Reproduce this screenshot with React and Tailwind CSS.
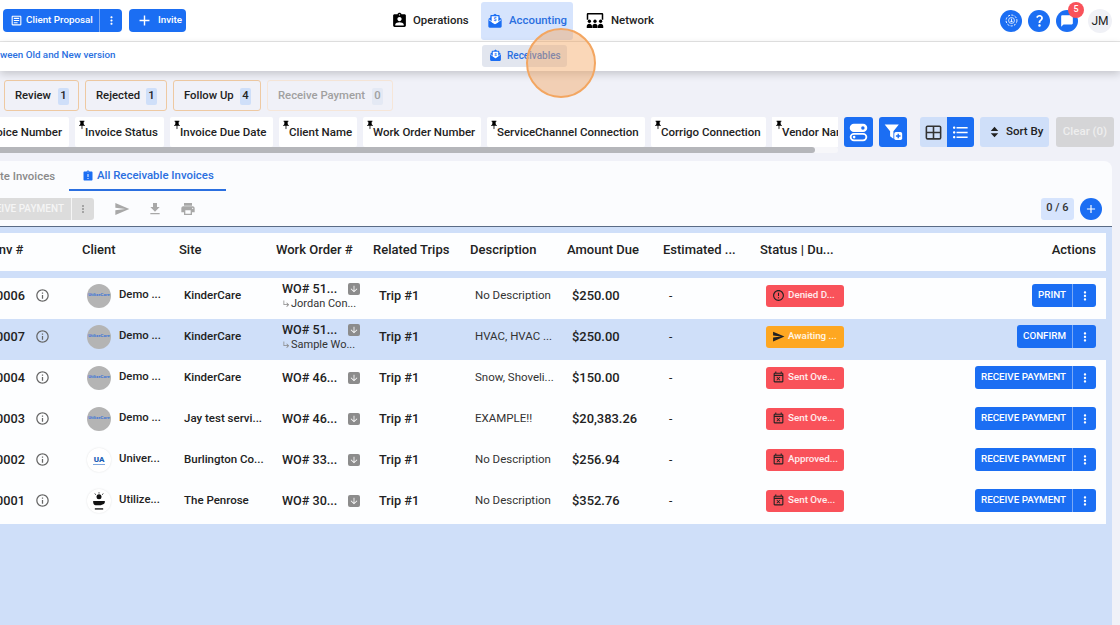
import React from "react";
import {
  MdAssignmentInd,
  MdAssignmentLate,
  MdOutlineArticle,
  MdAdd,
  MdMoreVert,
  MdPushPin,
  MdFormatListBulleted,
  MdSend,
  MdFileDownload,
  MdPrint,
  MdInfoOutline,
  MdErrorOutline,
  MdOutlineEventBusy,
  MdArrowDownward,
  MdQuestionMark,
  MdChatBubble,
  MdSubdirectoryArrowRight,
} from "react-icons/md";

function MoneyMail({ className }) {
  return (
    <svg viewBox="0 0 24 24" className={className} fill="currentColor">
      <path d="M2 9l3-2.400V4.500C5 3.700 5.700 3 6.500 3h2.700L12 1l2.800 2h2.700c.8 0 1.500.7 1.500 1.500v2.100L22 9v11c0 1.100-.9 2-2 2H4c-1.100 0-2-.9-2-2V9z" />
      <path d="M7 5h10v9l-5 3-5-3z" fill="#fff" />
      <path d="M2.500 10L12 16l9.500-6" fill="none" stroke="#fff" strokeWidth="1.200" />
      <text x="12" y="12.500" textAnchor="middle" fontSize="8" fontWeight="700" fontFamily="Roboto, sans-serif">$</text>
    </svg>
  );
}

function NetworkIcon({ className }) {
  return (
    <svg viewBox="0 0 24 20" className={className} fill="currentColor">
      <path d="M2.500 0h19A1.500 1.500 0 0 1 23 1.500V9h-2V2H3v7H1V1.500A1.500 1.500 0 0 1 2.500 0z" />
      <circle cx="4.500" cy="11" r="2.200" />
      <circle cx="12" cy="11" r="2.200" />
      <circle cx="19.500" cy="11" r="2.200" />
      <path d="M1 20v-2.500C1 15.500 2.500 14.300 4.500 14.300S8 15.500 8 17.500V20zM8.500 20v-2.500c0-2 1.500-3.200 3.500-3.200s3.500 1.200 3.500 3.200V20zM16 20v-2.500c0-2 1.500-3.200 3.500-3.200s3.500 1.200 3.500 3.200V20z" />
    </svg>
  );
}

function ToggleIcon({ className }) {
  return (
    <svg viewBox="0 0 24 24" className={className} fill="none" stroke="currentColor" strokeWidth="2">
      <rect x="3" y="3" width="18" height="7.500" rx="3.750" fill="currentColor" />
      <circle cx="17" cy="6.750" r="2" fill="#1b6ef3" stroke="none" />
      <rect x="3" y="13.500" width="18" height="7.500" rx="3.750" />
      <circle cx="7" cy="17.250" r="1.500" fill="currentColor" stroke="none" />
    </svg>
  );
}

function FilterPlus({ className }) {
  return (
    <svg viewBox="0 0 24 24" className={className} fill="currentColor">
      <path d="M2 3h17l-6.500 8v9l-4-3v-6z" />
      <rect x="13.500" y="12" width="9.500" height="9.500" rx="2" />
      <path d="M18.250 14v5.500M15.500 16.750H21" stroke="#1b6ef3" strokeWidth="1.600" />
    </svg>
  );
}

function GridIcon({ className }) {
  return (
    <svg viewBox="0 0 24 24" className={className} fill="none" stroke="currentColor" strokeWidth="2">
      <rect x="3" y="4" width="18" height="16" rx="1.500" />
      <path d="M3 12h18M12 4v16" />
    </svg>
  );
}

function SortIcon({ className }) {
  return (
    <svg viewBox="0 0 12 16" className={className} fill="currentColor">
      <path d="M6 1l5 5.500H1zM1 9.500h10L6 15z" />
    </svg>
  );
}

function DashedDown({ className }) {
  return (
    <svg viewBox="0 0 24 24" className={className} fill="none" stroke="currentColor" strokeWidth="1.800">
      <circle cx="12" cy="12" r="10" strokeDasharray="4 2.500" />
      <circle cx="12" cy="12" r="5.500" strokeWidth="1.400" />
      <path d="M12 8.500v6.500M9.500 12.500l2.500 2.500 2.500-2.500" strokeWidth="1.500" />
    </svg>
  );
}

function HandLogo({ className }) {
  return (
    <svg viewBox="0 0 24 24" className={className} fill="#111">
      <circle cx="12" cy="7" r="3" />
      <path d="M7 3l1 1.500M12 1.500v1.500M17 3l-1 1.500" stroke="#111" strokeWidth="1" />
      <path d="M5 12h14v1.500c0 1-1 2-2 2.500l-3 1H8c-2 0-3-2-3-3.500z" />
      <path d="M7 21.500h10" stroke="#111" strokeWidth="1.600" />
    </svg>
  );
}

const filters = [
  { label: "Review", count: 1, w: "w-[75px]" },
  { label: "Rejected", count: 1, w: "w-[82px]" },
  { label: "Follow Up", count: 4, w: "w-[88px]" },
];

const columns = [
  { label: "Invoice Status", w: "w-[89px]" },
  { label: "Invoice Due Date", w: "w-[103px]" },
  { label: "Client Name", w: "w-[78px]" },
  { label: "Work Order Number", w: "w-[118px]" },
  { label: "ServiceChannel Connection", w: "w-[158px]" },
  { label: "Corrigo Connection", w: "w-[115px]" },
];

const rows = [
  { inv: "0006", logo: "demo", client: "Demo ...", site: "KinderCare", wo: "WO# 51...", sub: "Jordan Con...", desc: "No Description", amount: "$250.00", status: "Denied D...", tone: "red", Icon: MdErrorOutline, action: "PRINT", actionW: "w-[41px]" },
  { inv: "0007", logo: "demo", client: "Demo ...", site: "KinderCare", wo: "WO# 51...", sub: "Sample Wo...", desc: "HVAC, HVAC ...", amount: "$250.00", status: "Awaiting ...", tone: "amber", Icon: MdSend, action: "CONFIRM", actionW: "w-[56px]", selected: true },
  { inv: "0004", logo: "demo", client: "Demo ...", site: "KinderCare", wo: "WO# 46...", desc: "Snow, Shoveli...", amount: "$150.00", status: "Sent Ove...", tone: "red", Icon: MdOutlineEventBusy, action: "RECEIVE PAYMENT", actionW: "w-[98px]" },
  { inv: "0003", logo: "demo", client: "Demo ...", site: "Jay test servi...", wo: "WO# 46...", desc: "EXAMPLE!!", amount: "$20,383.26", status: "Sent Ove...", tone: "red", Icon: MdOutlineEventBusy, action: "RECEIVE PAYMENT", actionW: "w-[98px]" },
  { inv: "0002", logo: "ua", client: "Univer...", site: "Burlington Co...", wo: "WO# 33...", desc: "No Description", amount: "$256.94", status: "Approved...", tone: "red", Icon: MdOutlineEventBusy, action: "RECEIVE PAYMENT", actionW: "w-[98px]" },
  { inv: "0001", logo: "hand", client: "Utilize...", site: "The Penrose", wo: "WO# 30...", desc: "No Description", amount: "$352.76", status: "Sent Ove...", tone: "red", Icon: MdOutlineEventBusy, action: "RECEIVE PAYMENT", actionW: "w-[98px]" },
];

function Logo({ kind }) {
  if (kind === "demo") {
    return (
      <div className="flex h-[24px] w-[24px] items-center justify-center overflow-hidden whitespace-nowrap rounded-full bg-[#b4b4b4] text-[4.400px] font-bold text-[#3f76d8]">
        UtilizeCore
      </div>
    );
  }
  if (kind === "ua") {
    return (
      <div className="flex h-[24px] w-[24px] flex-col items-center justify-center rounded-full bg-white shadow-[0_0_2px_rgba(0,0,0,0.12)]">
        <span className="text-[8px] font-black leading-[9px] text-[#1c5fb8]">UA</span>
        <span className="h-[1px] w-[12px] bg-[#7ea6de]" />
      </div>
    );
  }
  return (
    <div className="flex h-[24px] w-[24px] items-center justify-center rounded-full bg-white shadow-[0_0_2px_rgba(0,0,0,0.12)]">
      <HandLogo className="h-[20px] w-[20px]" />
    </div>
  );
}

function Row({ row }) {
  const StatusIcon = row.Icon;
  return (
    <div className={`flex h-[41px] items-center pb-[6px] text-[#222] ${row.selected ? "bg-[#cfdff9]" : "bg-[#fdfeff]"}`}>
      <div className="flex w-[87px] shrink-0 items-center">
        <span className="-ml-[4px] w-[39px] text-[12.700px] font-medium">{row.inv}</span>
        <MdInfoOutline className="h-[15px] w-[15px] text-[#666]" />
      </div>
      <div className="flex w-[97px] shrink-0 items-center gap-[8px]">
        <Logo kind={row.logo} />
        <span className="text-[11.300px] font-medium">{row.client}</span>
      </div>
      <div className="w-[98px] shrink-0 text-[11.500px] font-medium">{row.site}</div>
      <div className="w-[97px] shrink-0">
        <div className="flex items-center">
          <span className="w-[66px] text-[12.600px] font-medium leading-[16px]">{row.wo}</span>
          <span className="flex h-[12px] w-[12px] items-center justify-center rounded-[2px] bg-[#8c8c8c] text-white">
            <MdArrowDownward className="h-[10px] w-[10px]" />
          </span>
        </div>
        {row.sub && (
          <div className="flex items-center text-[11px] leading-[14px] text-[#333]">
            <MdSubdirectoryArrowRight className="h-[9px] w-[9px] text-[#888]" />
            {row.sub}
          </div>
        )}
      </div>
      <div className="w-[96px] shrink-0 text-[12.700px] font-medium">Trip #1</div>
      <div className="w-[97px] shrink-0 text-[11.500px] text-[#333]">{row.desc}</div>
      <div className="w-[97px] shrink-0 text-[12.900px] font-medium">{row.amount}</div>
      <div className="w-[97px] shrink-0 text-[12px]">-</div>
      <div className={`flex h-[22px] w-[78px] shrink-0 items-center gap-[3px] rounded-[3px] px-[6px] text-[9.800px] font-medium text-white/90 ${row.tone === "red" ? "bg-[#f9525a]" : "bg-[#fea721]"}`}>
        <StatusIcon className="h-[13px] w-[13px] shrink-0 text-[#222]" />
        <span className="whitespace-nowrap">{row.status}</span>
      </div>
      <div className="ml-auto mr-[10px] flex h-[23px] overflow-hidden rounded-[3px] bg-[#1b6ef3] text-white">
        <span className={`flex items-center justify-center border-r border-[#7aa9f5] text-[9.800px] font-medium ${row.actionW}`}>
          {row.action}
        </span>
        <span className="flex w-[23px] items-center justify-center">
          <MdMoreVert className="h-[14px] w-[14px]" />
        </span>
      </div>
    </div>
  );
}

export default function App() {
  return (
    <div className="relative flex h-[625px] w-[1120px] flex-col overflow-hidden bg-[#f0f1f8] font-['Roboto',sans-serif] text-[#222]">
      {/* top nav */}
      <div className="flex h-[42px] shrink-0 items-center border-b border-[#e6e6e6] bg-white">
        <div className="flex w-[388px] shrink-0 items-center pl-[3px]">
          <div className="flex h-[23px] items-center rounded-[4px] bg-[#1b6ef3] text-white">
            <span className="flex h-full w-[97px] items-center gap-[3px] whitespace-nowrap border-r border-[#7aa9f5] pl-[7px] text-[9.800px] font-medium">
              <MdOutlineArticle className="h-[13px] w-[13px]" />
              Client Proposal
            </span>
            <span className="flex w-[22px] items-center justify-center">
              <MdMoreVert className="h-[13px] w-[13px]" />
            </span>
          </div>
          <div className="ml-[7px] flex h-[23px] w-[57px] items-center gap-[5px] rounded-[4px] bg-[#1b6ef3] pl-[7px] text-[9.800px] font-medium text-white">
            <MdAdd className="h-[17px] w-[17px]" />
            Invite
          </div>
        </div>
        <div className="flex items-center text-[11.400px] font-medium">
          <div className="flex w-[93px] items-center gap-[5px] pl-[3px]">
            <MdAssignmentInd className="h-[17px] w-[17px] text-black" />
            Operations
          </div>
          <div className="flex h-[38px] w-[92px] items-center gap-[6px] rounded-[3px] bg-[#d6e4fd] pl-[6px] text-[#2a6fe0]">
            <MoneyMail className="h-[16px] w-[16px] text-[#1b6ef3]" />
            Accounting
          </div>
          <div className="ml-[13px] flex items-center gap-[7px]">
            <NetworkIcon className="h-[15px] w-[18px] text-black" />
            Network
          </div>
        </div>
        <div className="ml-auto mr-[8px] flex items-center gap-[6px]">
          <span className="flex h-[22px] w-[22px] items-center justify-center rounded-full bg-[#1b6ef3] text-white">
            <DashedDown className="h-[13px] w-[13px]" />
          </span>
          <span className="flex h-[22px] w-[22px] items-center justify-center rounded-full bg-[#1b6ef3] text-white">
            <MdQuestionMark className="h-[15px] w-[15px]" />
          </span>
          <span className="relative flex h-[22px] w-[22px] items-center justify-center rounded-full bg-[#1b6ef3] text-white">
            <MdChatBubble className="h-[14px] w-[14px]" />
            <span className="absolute -right-[6px] -top-[8px] flex h-[16px] w-[16px] items-center justify-center rounded-full bg-[#f9525a] text-[9px] font-medium">5</span>
          </span>
          <span className="ml-[4px] flex h-[24px] w-[24px] items-center justify-center rounded-full bg-[#f0f1f6] text-[12px]">JM</span>
        </div>
      </div>

      {/* sub nav */}
      <div className="z-10 flex h-[29px] shrink-0 items-center bg-white pb-[2px] shadow-[0_3px_8px_rgba(0,0,0,0.18)]">
        <span className="w-[482px] shrink-0 whitespace-nowrap text-[9.800px] font-medium text-[#2a6fe0]">ween Old and New version</span>
        <div className="flex h-[22px] w-[85px] items-center gap-[5px] rounded-[3px] bg-[#e2e6ef] pl-[7px] text-[10px] font-medium text-[#2a6fe0]">
          <MoneyMail className="h-[13px] w-[13px] text-[#1b6ef3]" />
          Receivables
        </div>
      </div>

      {/* quick filters */}
      <div className="mt-[9px] flex h-[31px] shrink-0 items-center gap-[6px] pl-[4px] text-[11.300px] font-medium">
        {filters.map((f) => (
          <div key={f.label} className={`flex h-full items-center justify-between rounded-[3px] border border-[#eec9a2] pl-[10px] pr-[9px] pt-[1px] ${f.w}`}>
            {f.label}
            <span className="flex h-[17px] w-[11px] items-center justify-center rounded-[2px] bg-[#cfdff9]">{f.count}</span>
          </div>
        ))}
        <div className="flex h-full w-[126px] items-center justify-between rounded-[3px] border border-[#f6e6d8] pl-[10px] pr-[9px] pt-[1px] text-[#a0a0a0]">
          Receive Payment
          <span className="flex h-[17px] w-[11px] items-center justify-center rounded-[2px] bg-[#e4e9f4]">0</span>
        </div>
      </div>

      {/* column chips and view controls */}
      <div className="mt-[6px] flex h-[36px] shrink-0">
        <div className="w-[838px] shrink-0 overflow-hidden">
          <div className="flex h-[30px] gap-[6px] whitespace-nowrap text-[11.500px] font-medium">
            <div className="flex w-[69px] shrink-0 items-center justify-end rounded-r-[2px] bg-white pr-[7px] pt-[1px]">
              <span>oice Number</span>
            </div>
            {columns.map((c) => (
              <div key={c.label} className={`relative flex shrink-0 items-center rounded-[2px] bg-white pl-[10px] pt-[1px] ${c.w}`}>
                <MdPushPin className="absolute left-[2px] top-[3px] h-[10px] w-[10px] text-black" />
                {c.label}
              </div>
            ))}
            <div className="relative flex w-[66px] shrink-0 items-center overflow-hidden bg-white pl-[10px] pt-[1px]">
              <MdPushPin className="absolute left-[2px] top-[3px] h-[10px] w-[10px] text-black" />
              Vendor Name
            </div>
          </div>
          <div className="h-[6px] rounded-r-full bg-[#f7f7fa]">
            <div className="h-full w-[815px] rounded-r-full bg-[#b5b6ba]" />
          </div>
        </div>
        <div className="flex h-[30px] items-center pl-[6px]">
          <span className="flex h-[30px] w-[29px] items-center justify-center rounded-[3px] bg-[#1b6ef3] text-white">
            <ToggleIcon className="h-[21px] w-[21px]" />
          </span>
          <span className="ml-[6px] flex h-[30px] w-[28px] items-center justify-center rounded-[3px] bg-[#1b6ef3] text-white">
            <FilterPlus className="h-[20px] w-[20px]" />
          </span>
          <div className="ml-[13px] flex h-[30px] w-[54px] overflow-hidden rounded-[3px] bg-[#cfdff9]">
            <span className="flex w-[27px] items-center justify-center text-[#333]">
              <GridIcon className="h-[19px] w-[19px]" />
            </span>
            <span className="flex w-[27px] items-center justify-center bg-[#1b6ef3] text-white">
              <MdFormatListBulleted className="h-[19px] w-[19px]" />
            </span>
          </div>
          <div className="ml-[6px] flex h-[30px] w-[69px] items-center gap-[7px] rounded-[3px] bg-[#cfdff9] pl-[10px] text-[11.500px] font-medium">
            <SortIcon className="h-[12px] w-[9px]" />
            Sort By
          </div>
          <div className="ml-[7px] flex h-[30px] w-[58px] items-center justify-center rounded-[3px] bg-[#d5d5d7] text-[11.500px] font-medium text-[#eeeeee]">
            Clear (0)
          </div>
        </div>
      </div>

      {/* card */}
      <div className="mt-[8px] flex w-[1112px] min-h-0 flex-1 flex-col rounded-tr-[8px] bg-[#fbfcfe]">
        <div className="flex h-[30px] shrink-0 items-center text-[11.400px] font-medium">
          <span className="w-[69px] shrink-0 pt-[1px] text-[#8a8a8a]">te Invoices</span>
          <div className="flex h-full w-[157px] items-center gap-[3px] border-b-2 border-[#2a6fe0] pl-[13px] pt-[1px] text-[#2a6fe0]">
            <MdAssignmentLate className="h-[12px] w-[12px] text-[#1b6ef3]" />
            All Receivable Invoices
          </div>
        </div>
        <div className="mt-[6px] flex h-[23px] shrink-0 items-center pr-[10px]">
          <div className="flex h-[22px] w-[94px] overflow-hidden rounded-r-[3px] bg-[#dcdcdc] text-[10px] font-medium text-[#f5f5f5]">
            <span className="flex w-[72px] items-center justify-end whitespace-nowrap border-r border-[#f5f5f5] pr-[7px]">EIVE PAYMENT</span>
            <span className="flex flex-1 items-center justify-center text-[#999]">
              <MdMoreVert className="h-[12px] w-[12px]" />
            </span>
          </div>
          <MdSend className="ml-[20px] h-[16px] w-[16px] text-[#a8a8a8]" />
          <MdFileDownload className="ml-[17px] h-[16px] w-[16px] text-[#a8a8a8]" />
          <MdPrint className="ml-[17px] h-[16px] w-[16px] text-[#a8a8a8]" />
          <span className="ml-auto flex h-[22px] w-[33px] items-center justify-center rounded-[3px] bg-[#d6e4fd] text-[11px] font-medium text-[#333]">0 / 6</span>
          <span className="ml-[6px] flex h-[22px] w-[22px] items-center justify-center rounded-full bg-[#1b6ef3] text-white">
            <MdAdd className="h-[14px] w-[14px]" />
          </span>
        </div>

        {/* table */}
        <div className="mt-[6px] flex-1 border-t border-[#5a6b85] bg-[#cfdff9] pt-[6px]">
          <div className="flex h-[38px] w-[1106px] items-center overflow-hidden bg-[#fdfeff] pb-[4px] text-[13px] font-medium">
            <span className="-ml-[5px] w-[87px] shrink-0">Inv #</span>
            <span className="w-[97px] shrink-0">Client</span>
            <span className="w-[97px] shrink-0">Site</span>
            <span className="w-[97px] shrink-0">Work Order #</span>
            <span className="w-[97px] shrink-0">Related Trips</span>
            <span className="w-[97px] shrink-0">Description</span>
            <span className="w-[96px] shrink-0">Amount Due</span>
            <span className="w-[97px] shrink-0">Estimated ...</span>
            <span className="w-[97px] shrink-0">Status | Du...</span>
            <span className="ml-auto pr-[10px]">Actions</span>
          </div>
          <div className="mt-[7px] w-[1106px]">
            {rows.map((r) => (
              <Row key={r.inv} row={r} />
            ))}
          </div>
        </div>
      </div>

      {/* click highlight */}
      <div className="absolute left-[526px] top-[28px] z-20 h-[70px] w-[70px] rounded-full border-[2px] border-[#f3a661] bg-[#f3a661]/45" />
    </div>
  );
}
